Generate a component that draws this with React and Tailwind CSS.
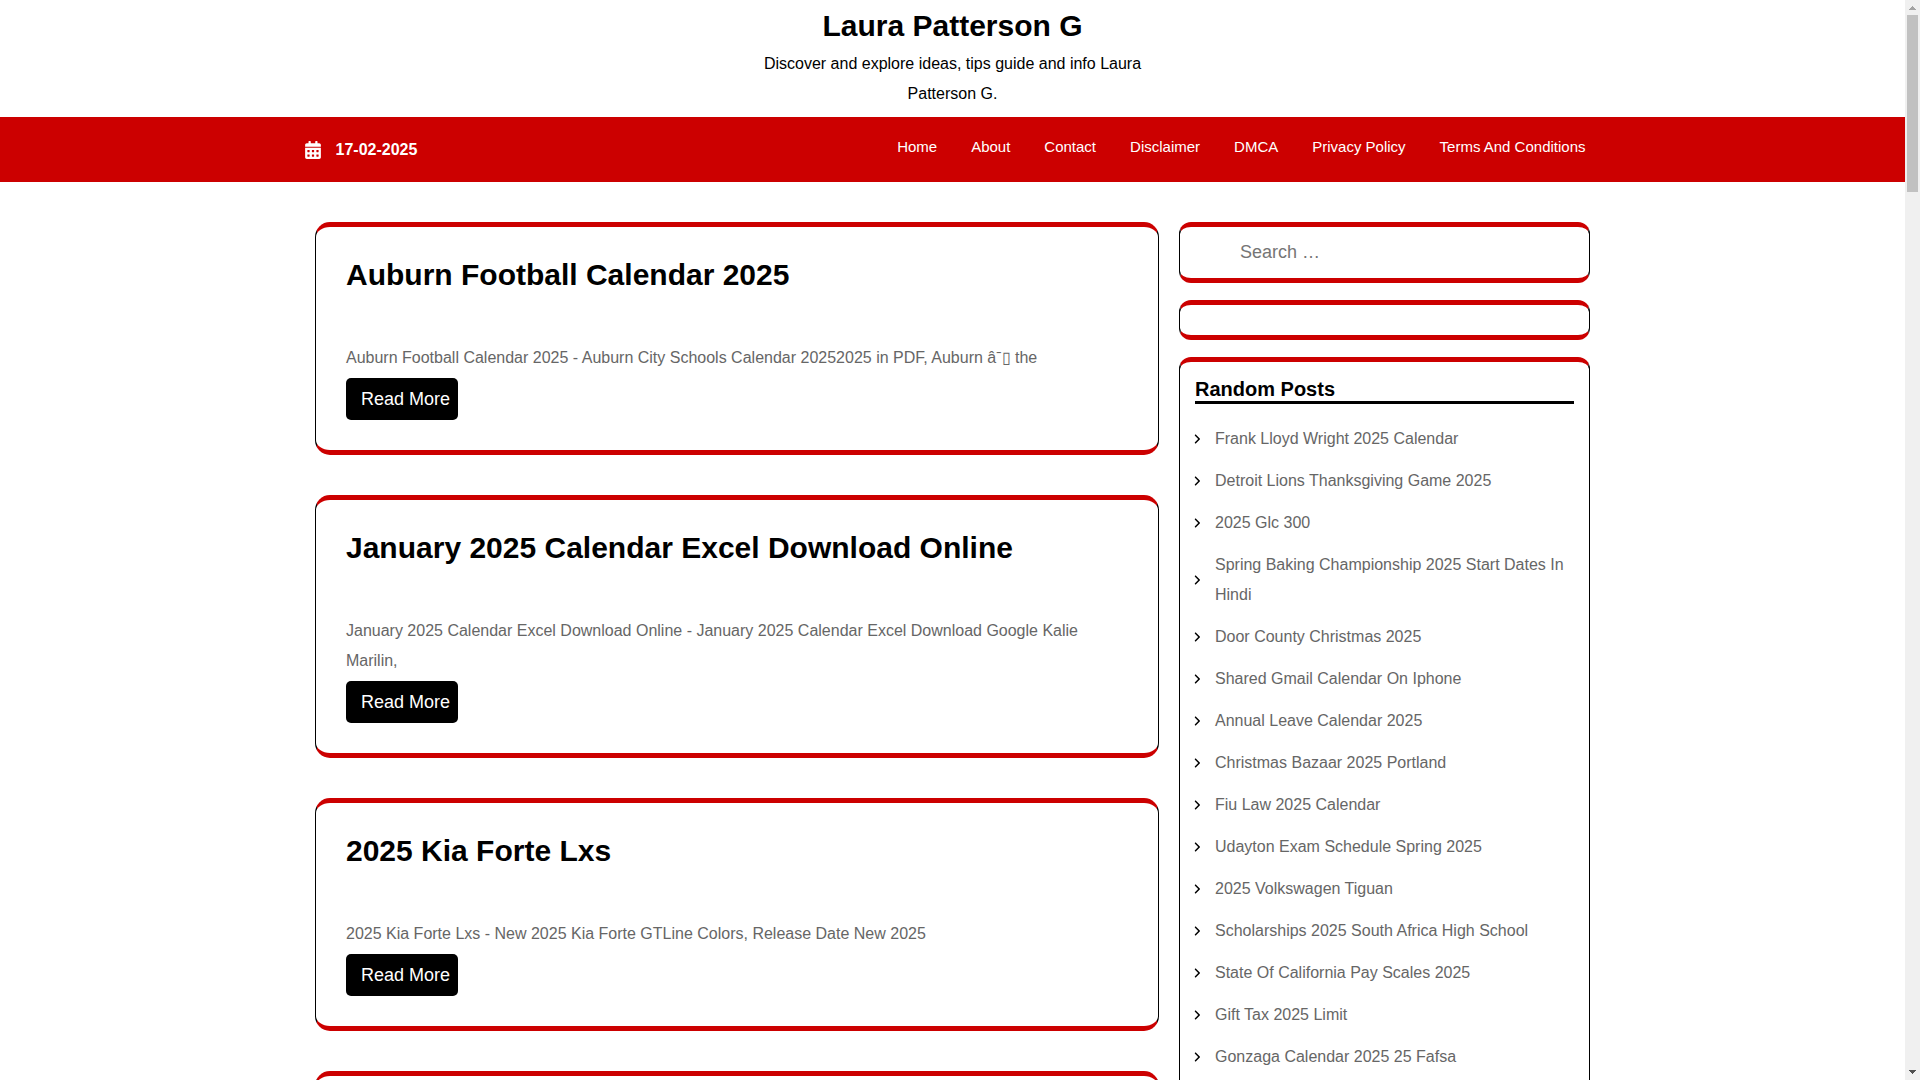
import { FaCalendarAlt } from 'react-icons/fa';
import { FaAngleRight } from 'react-icons/fa6';

const NAV_LINKS = ['Home', 'About', 'Contact', 'Disclaimer', 'DMCA', 'Privacy Policy', 'Terms And Conditions'];

const POSTS = [
  {
    id: 1,
    title: 'Auburn Football Calendar 2025',
    excerpt: 'Auburn Football Calendar 2025 - Auburn City Schools Calendar 20252025 in PDF, Auburn âˉ▯ the',
  },
  {
    id: 2,
    title: 'January 2025 Calendar Excel Download Online',
    excerpt: 'January 2025 Calendar Excel Download Online - January 2025 Calendar Excel Download Google Kalie Marilin,',
  },
  {
    id: 3,
    title: '2025 Kia Forte Lxs',
    excerpt: '2025 Kia Forte Lxs - New 2025 Kia Forte GTLine Colors, Release Date New 2025',
  },
];

const RANDOM_POSTS = [
  'Frank Lloyd Wright 2025 Calendar',
  'Detroit Lions Thanksgiving Game 2025',
  '2025 Glc 300',
  'Spring Baking Championship 2025 Start Dates In Hindi',
  'Door County Christmas 2025',
  'Shared Gmail Calendar On Iphone',
  'Annual Leave Calendar 2025',
  'Christmas Bazaar 2025 Portland',
  'Fiu Law 2025 Calendar',
  'Udayton Exam Schedule Spring 2025',
  '2025 Volkswagen Tiguan',
  'Scholarships 2025 South Africa High School',
  'State Of California Pay Scales 2025',
  'Gift Tax 2025 Limit',
  'Gonzaga Calendar 2025 25 Fafsa',
];

function Header() {
  return (
    <header className="flex flex-col items-center px-3 py-2 text-center text-black">
      <h1 className="text-[30px] leading-9 font-bold">
        <a href="#home">Laura Patterson G</a>
      </h1>
      <p className="mt-[5px] max-w-[416px] leading-[30px]">
        Discover and explore ideas, tips guide and info Laura Patterson G.
      </p>
    </header>
  );
}

function NavBar() {
  return (
    <div className="bg-[#cc0000] text-white">
      <div className="mx-auto flex max-w-[1296px] items-start justify-between">
        <div className="flex h-[65px] items-center gap-[15px] font-bold">
          <FaCalendarAlt size={18} className="w-4" />
          <span>17-02-2025</span>
        </div>
        <nav className="flex gap-[34px] pt-[15px] pr-[15px] text-[15px] leading-[30px]">
          {NAV_LINKS.map((label) => (
            <a key={label} href="#nav">{label}</a>
          ))}
        </nav>
      </div>
    </div>
  );
}

function PostCard({ post }) {
  return (
    <article className="rounded-[15px] border-x border-y-[5px] border-x-black border-y-[#cc0000] p-[30px]">
      <h2 className="text-[30px] leading-9 font-bold text-black">
        <a href="#post">{post.title}</a>
      </h2>
      <p className="mt-[50px] mb-[5px] leading-[30px] text-[#666666]">{post.excerpt}</p>
      <a
        href="#post"
        className="inline-flex h-[42px] items-center rounded-[5px] bg-black pr-2 pl-[15px] align-top text-lg text-white"
      >
        Read More
      </a>
    </article>
  );
}

function Widget({ className = '', children }) {
  return (
    <section className={`rounded-[12px] border-x border-y-[5px] border-x-black border-y-[#cc0000] px-[15px] ${className}`}>
      {children}
    </section>
  );
}

function Sidebar() {
  return (
    <aside className="flex flex-col gap-[17px]">
      <Widget>
        <form role="search">
          <input
            type="search"
            aria-label="Search for"
            placeholder="Search …"
            className="block h-[51px] w-full bg-transparent pl-[45px] text-lg text-black outline-none placeholder:text-[#757575]"
          />
        </form>
      </Widget>
      <Widget className="h-10" />
      <Widget className="flex-1 py-[15px]">
        <h3 className="border-b-[3px] border-black text-xl leading-6 font-bold text-black">Random Posts</h3>
        <ul className="mt-5 flex flex-col gap-3 text-[#666666]">
          {RANDOM_POSTS.map((title) => (
            <li key={title} className="flex items-center leading-[30px]">
              <FaAngleRight size={12} className="mr-[14px] -ml-0.5 w-2 shrink-0 text-black" />
              <a href="#random">{title}</a>
            </li>
          ))}
        </ul>
      </Widget>
    </aside>
  );
}

function ScrollBar() {
  return (
    <div className="flex w-[15px] shrink-0 flex-col items-center justify-between bg-[#f0f0f0]" aria-hidden="true">
      <div className="flex w-full flex-col items-center">
        <svg width="15" height="15" viewBox="0 0 15 15" shapeRendering="crispEdges">
          <path d="M4 10V9h1V8h1V7h1V6h1v1h1v1h1v1h1v1z" fill="#a3a3a3" />
        </svg>
        <div className="h-[177px] w-[11px] bg-[#c1c1c1]" />
      </div>
      <svg width="15" height="15" viewBox="0 0 15 15" shapeRendering="crispEdges">
        <path d="M4 5h7v1h-1v1H9v1H8v1H7V8H6V7H5V6H4z" fill="#505050" />
      </svg>
    </div>
  );
}

export default function App() {
  return (
    <div className="flex h-screen overflow-hidden bg-white font-['Liberation_Sans',Arial,sans-serif] text-base">
      <div className="min-w-0 flex-1 overflow-hidden">
        <Header />
        <NavBar />
        <main className="mx-auto grid max-w-[1275px] grid-cols-[minmax(0,1fr)_411px] gap-5 pt-10">
          <div className="flex flex-col gap-10">
            {POSTS.map((post) => (
              <PostCard key={post.id} post={post} />
            ))}
            <article className="min-h-60 rounded-[15px] border-x border-y-[5px] border-x-black border-y-[#cc0000]" />
          </div>
          <Sidebar />
        </main>
      </div>
      <ScrollBar />
    </div>
  );
}
